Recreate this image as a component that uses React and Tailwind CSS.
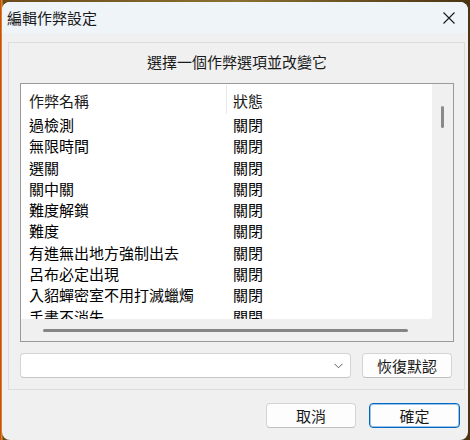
import React from "react";

const rows = [
  "過檢測",
  "無限時間",
  "選關",
  "關中關",
  "難度解鎖",
  "難度",
  "有進無出地方強制出去",
  "呂布必定出現",
  "入貂蟬密室不用打滅蠟燭",
  "手書不消失",
];

export default function App() {
  return (
    <div
      className="w-[470px] h-[440px] overflow-hidden pt-[2px] pl-[2px] bg-[linear-gradient(90deg,#c0301c_0px,#e0a020_2px,#6a4a1a_3px,#8a7030_50%,#4a3412_100%)]"
      style={{ fontFamily: '"Noto Sans CJK TC", "Noto Sans", sans-serif' }}
    >
      <div className="w-[466px] h-[438px] rounded-[8px] bg-[#f0f0f0] flex flex-col overflow-hidden text-black">
        {/* title bar */}
        <div className="h-[31px] shrink-0 bg-[#eff4f9] flex items-center justify-between pl-[5px] pr-[13px]">
          <span className="text-[15px] leading-[20px] text-[#1a1a1a]">編輯作弊設定</span>
          <svg width="12" height="12" viewBox="0 0 12 12">
            <path d="M0.5 0.5 L11.5 11.5 M11.5 0.5 L0.5 11.5" stroke="#1a1a1a" strokeWidth="1.1" />
          </svg>
        </div>

        {/* group box */}
        <div className="ml-[6px] mt-[9px] w-[457px] h-[348px] border border-[#dcdcdc] flex flex-col pl-[11px] pt-[9px]">
          <div className="w-[434px] text-center text-[15px] leading-[20px] text-[#1a1a1a]">
            選擇一個作弊選項並改變它
          </div>

          {/* list */}
          <div className="mt-[11px] w-[434px] h-[259px] border border-[#9a9a9a] flex">
            <div className="w-[411px] flex flex-col">
              <div className="flex-1 bg-white overflow-hidden rounded-br-[3px]">
                <div className="h-[30px] flex text-[15px] leading-[21px] text-[#1a1a1a]">
                  <div className="w-[205px] pl-[8px] pt-[6px]">作弊名稱</div>
                  <div className="w-px h-[29px] mt-[1px] bg-[#e8e8e8]" />
                  <div className="pl-[6px] pt-[6px]">狀態</div>
                </div>
                {rows.map((r) => (
                  <div key={r} className="h-[21.3px] flex text-[15px] leading-[21.3px] whitespace-nowrap">
                    <div className="w-[206px] pl-[8px]">{r}</div>
                    <div className="pl-[6px]">關閉</div>
                  </div>
                ))}
              </div>
              <div className="h-[22px] shrink-0 bg-[#f0f0f0] flex items-center pl-[22px]">
                <div className="w-[365px] h-[3px] rounded-full bg-[#858585]" />
              </div>
            </div>
            <div className="w-[21px] bg-[#f0f0f0] flex justify-center pt-[22px]">
              <div className="w-[3px] h-[22px] rounded-full bg-[#8a8a8a]" />
            </div>
          </div>

          {/* combobox row */}
          <div className="mt-[11px] flex">
            <div className="w-[331px] h-[25px] bg-white border border-[#d4d4d4] border-b-[#c4c4c4] rounded-[4px] flex items-center justify-end pr-[7px]">
              <svg width="9" height="6" viewBox="0 0 9 6">
                <path d="M0.5 0.8 L4.5 4.8 L8.5 0.8" fill="none" stroke="#606060" strokeWidth="1" />
              </svg>
            </div>
            <button className="ml-[11px] w-[90px] h-[25px] bg-[#fdfdfd] border border-[#d4d4d4] border-b-[#c0c0c0] rounded-[4px] text-[15px] leading-[20px] text-[#1a1a1a]">
              恢復默認
            </button>
          </div>
        </div>

        {/* bottom buttons */}
        <div className="mt-[13px] flex justify-end pr-[8px] gap-[13px]">
          <button className="w-[90px] h-[25px] bg-[#fdfdfd] border border-[#d4d4d4] border-b-[#c0c0c0] rounded-[4px] text-[15px] leading-[20px] text-[#1a1a1a]">
            取消
          </button>
          <button className="w-[91px] h-[25px] bg-[#fdfdfd] border border-[#0067c0] rounded-[4px] text-[15px] leading-[20px] text-[#1a1a1a] shadow-[inset_0_0_0_1px_#9cc4ea]">
            確定
          </button>
        </div>
      </div>
    </div>
  );
}
